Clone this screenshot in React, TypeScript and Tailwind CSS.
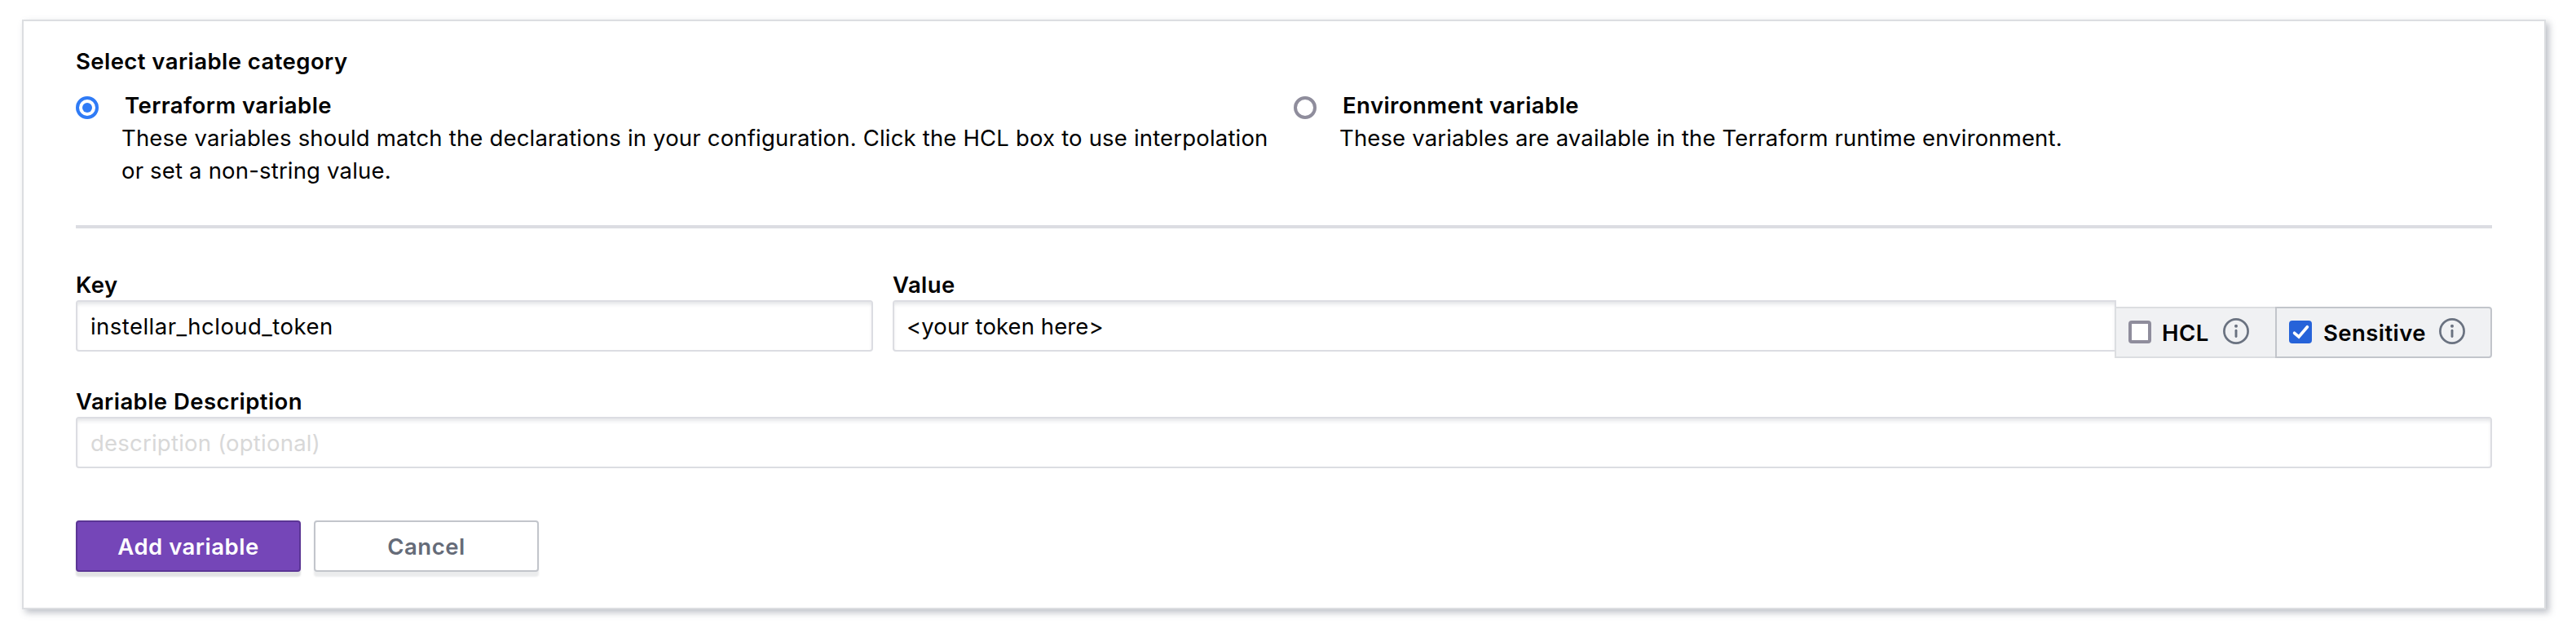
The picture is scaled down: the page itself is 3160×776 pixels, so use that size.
import React from "react";

function InfoIcon({ className }: { className: string }) {
  return (
    <svg className={className} width="32" height="32" viewBox="0 0 32 32" fill="none">
      <circle cx="16" cy="16" r="14.6" stroke="#6a7280" strokeWidth="2.7" />
      <path d="M16 15.2V22.5" stroke="#6a7280" strokeWidth="2.9" strokeLinecap="round" />
      <circle cx="16" cy="9.8" r="2" fill="#6a7280" />
    </svg>
  );
}

function Label({ children }: { children: React.ReactNode }) {
  return <div className="h-10 whitespace-nowrap pt-px font-semibold tracking-[0.44px]">{children}</div>;
}

const inputBase =
  "block h-[63px] border-2 border-[#dcdde2] bg-white pt-px pr-4 text-[27.5px] text-black outline-none placeholder:text-[#d8d8d8] placeholder:opacity-100 shadow-[inset_0_4px_4px_-1px_rgba(90,95,110,0.16)]";

export default function App() {
  return (
    <div className="h-[776px] w-[3160px] overflow-hidden bg-white pl-[27px] pt-6 font-['Inter','Noto_Sans',sans-serif] text-[27.5px] leading-10 tracking-[0.18px] text-black">
      <section className="h-[723px] w-[3096px] border-2 border-[#dcdee1] bg-white px-16 pt-[29px] shadow-[4px_4px_8px_rgba(100,108,125,0.42)]">
        <div className="h-10 whitespace-nowrap font-semibold tracking-[0.44px]">Select variable category</div>
        <div className="mt-[14px] flex">
          <div className="flex w-[1494px]">
            <span className="mt-[9px] flex size-7 items-center justify-center rounded-full border-4 border-[#2f7bf6] bg-white">
              <span className="size-3 rounded-full bg-[#2f7bf6]" />
            </span>
            <div className="ml-7 w-[1420px] whitespace-nowrap">
              <div className="pl-1 font-semibold tracking-[0.44px]">Terraform variable</div>
              <p>These variables should match the declarations in your configuration. Click the HCL box to use interpolation</p>
              <p>or set a non-string value.</p>
            </div>
          </div>
          <div className="flex">
            <span className="mt-[9px] size-7 rounded-full border-4 border-[#8f8d9c] bg-white" />
            <div className="ml-7 whitespace-nowrap">
              <div className="pl-1 font-semibold tracking-[0.44px]">Environment variable</div>
              <p className="tracking-[0.14px]">These variables are available in the Terraform runtime environment.</p>
            </div>
          </div>
        </div>
        <hr className="mt-[47px] h-1 border-0 bg-[#dcdde2]" />

        <div className="mt-12 flex">
          <div className="w-[978px]">
            <Label>Key</Label>
            <input className={`${inputBase} w-full rounded-[4px] pl-4 tracking-[0.46px]`} defaultValue="instellar_hcloud_token" />
          </div>
          <div className="ml-6 w-[1501px]">
            <Label>Value</Label>
            <input className={`${inputBase} w-full rounded-l-[4px] pl-[15px] tracking-[0.1px]`} defaultValue="<your token here>" />
          </div>
          <div className="-ml-[2px] mt-12 flex h-[63px] w-[463px] font-semibold tracking-[0.44px]">
            <label className="flex w-[197px] items-start border-2 border-r-0 border-[#dcdee1] bg-[#f0f1f3] pl-[15px]">
              <span className="mt-[15px] size-7 rounded-[4px] border-4 border-[#8f8d9c] bg-white" />
              <span className="ml-[13px] mt-[10px] w-[61px]">HCL</span>
              <InfoIcon className="ml-[14px] mt-3" />
            </label>
            <label className="flex w-[266px] items-start rounded-r-[4px] border-2 border-[#c2c5cb] bg-[#f0f1f3] pl-[15px]">
              <span className="mt-[15px] size-7 rounded-[4px] bg-[#2663d9]">
                <svg width="28" height="28" viewBox="0 0 28 28" fill="none">
                  <path d="M6.6 15.3L12 20L22.4 7.8" stroke="white" strokeWidth="3.7" strokeLinecap="round" />
                </svg>
              </span>
              <span className="ml-[14px] mt-[10px] w-[128px]">Sensitive</span>
              <InfoIcon className="ml-[14px] mt-3" />
            </label>
          </div>
        </div>

        <div className="mt-8">
          <Label>Variable Description</Label>
          <input className={`${inputBase} w-full rounded-[4px] pl-4 tracking-[0.22px]`} placeholder="description (optional)" />
        </div>

        <div className="mt-16 flex gap-4">
          <button className="h-[63px] w-[276px] whitespace-nowrap rounded-[4px] border-2 border-[#5b3595] bg-[#7546b8] pt-px font-semibold tracking-[0.5px] text-white shadow-[0_6px_2px_rgba(60,65,75,0.15)]">
            Add variable
          </button>
          <button className="h-[63px] w-[276px] whitespace-nowrap rounded-[4px] border-2 border-[#c2c5cb] bg-white pt-px font-semibold tracking-[0.5px] text-[#656b78] shadow-[0_6px_2px_rgba(60,65,75,0.1)]">
            Cancel
          </button>
        </div>
      </section>
    </div>
  );
}
